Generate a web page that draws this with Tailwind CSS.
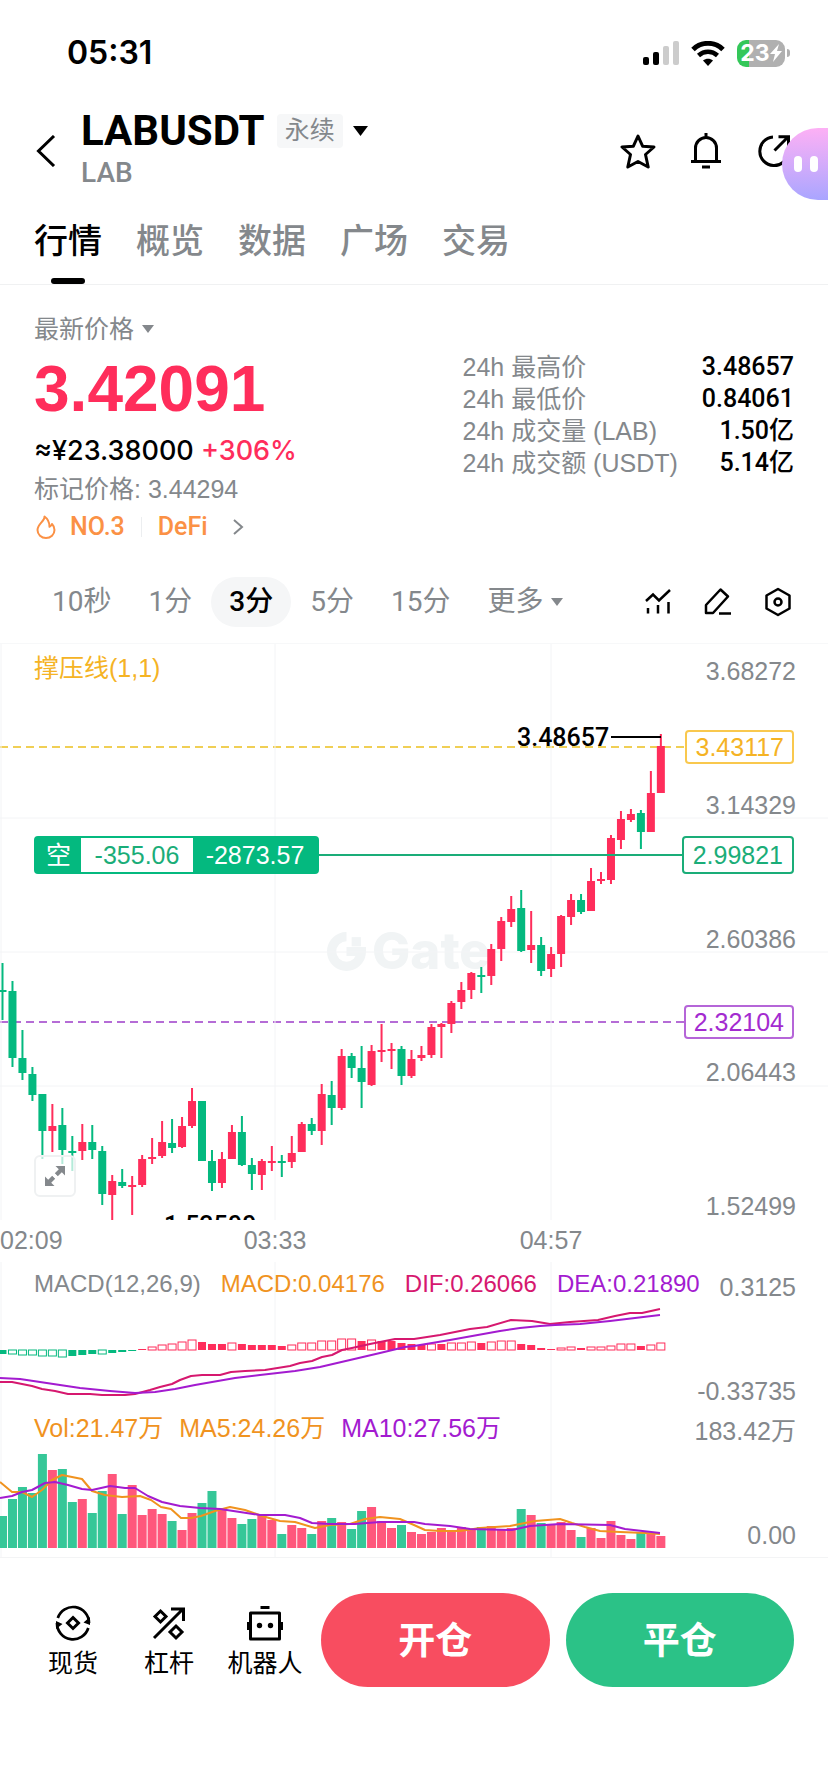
<!DOCTYPE html>
<html lang="zh-CN">
<head>
  <meta charset="UTF-8">
  <meta name="viewport" content="width=device-width, initial-scale=1.0">
  <title>LABUSDT 永续</title>
  <script src="https://cdn.jsdelivr.net/npm/@tailwindcss/browser@4"></script>
</head>
<body class="bg-white text-black min-h-screen overflow-x-hidden font-['Liberation_Sans','Noto_Sans_CJK_SC',sans-serif]">

  <!-- Status bar -->
  <div class="flex items-center justify-between h-[106px] pl-[67px] pr-[38px]">
    <span class="font-['Inter',sans-serif] font-semibold text-[32px] leading-8">05:31</span>
    <div class="flex items-center gap-3">
      <svg class="w-9 h-6" viewBox="0 0 36 24">
        <rect x="0" y="16" width="6" height="8" rx="2" fill="#000"/>
        <rect x="10" y="11" width="6" height="13" rx="2" fill="#000"/>
        <rect x="20" y="5" width="6" height="19" rx="2" fill="#ccc"/>
        <rect x="30" y="0" width="6" height="24" rx="2" fill="#ccc"/>
      </svg>
      <svg class="w-[34px] h-[25px]" viewBox="0 0 34 25">
        <path d="M2 8.500C10.500 0.300 23.500 0.300 32 8.500" fill="none" stroke="#000" stroke-width="5"/>
        <path d="M7.500 14.500C13 9.500 21 9.500 26.500 14.500" fill="none" stroke="#000" stroke-width="4.500"/>
        <path d="M17 25l-5-5.500c3-2.300 7-2.300 10 0z" fill="#000"/>
      </svg>
      <div class="flex items-center gap-0.5">
        <div class="flex items-center justify-center w-12 h-[27px] rounded-[9px] text-white bg-linear-to-r from-[#34c759] from-25% to-[#b0b0b0] to-25%">
          <span class="font-['Inter',sans-serif] font-bold text-[23px] leading-6">23</span>
          <svg class="w-3 h-[18px]" viewBox="0 0 12 18"><path d="M9 0L0 10h5l-2 8 9-11H7z" fill="#fff"/></svg>
        </div>
        <div class="w-[3px] h-2 rounded-r-full bg-[#b0b0b0]"></div>
      </div>
    </div>
  </div>

  <!-- Header -->
  <header class="relative flex items-center h-[90px] pl-9 pr-9">
    <button aria-label="返回" class="w-[45px]">
      <svg class="w-5 h-8" viewBox="0 0 20 32"><path d="M18 1L2.500 16 18 31" fill="none" stroke="#000" stroke-width="3"/></svg>
    </button>
    <div class="pb-1 font-['Roboto','Noto_Sans_CJK_SC',sans-serif]">
      <div class="flex items-center h-12">
        <h1 class="font-bold text-[42px] leading-12">LABUSDT</h1>
        <span class="ml-3 px-2 h-[34px] leading-[34px] rounded bg-[#f6f7f8] text-[25px] text-[#84888c]">永续</span>
        <svg class="ml-2.5 w-[15px] h-2.5" viewBox="0 0 15 10"><path d="M0 0h15L7.500 10z"/></svg>
      </div>
      <p class="font-medium text-[28px] leading-9 text-[#84888c]">LAB</p>
    </div>
    <div class="flex items-center gap-8 ml-auto">
      <button aria-label="收藏">
        <svg class="w-9 h-9" viewBox="0 0 36 36"><path d="M18 3l4.600 10.200 11.400.8-8.500 7.500 2.700 12.500L18 28.500 7.800 34l2.700-12.500L2 14l11.400-.8z" fill="none" stroke="#000" stroke-width="3" stroke-linejoin="round"/></svg>
      </button>
      <button aria-label="提醒">
        <svg class="w-9 h-9" viewBox="0 0 36 36"><path d="M18 0v4M7.500 28V15a10.500 10.500 0 0 1 21 0v13M3 28.500h30M14 34h8" fill="none" stroke="#000" stroke-width="3"/></svg>
      </button>
      <button aria-label="分享">
        <svg class="w-9 h-9" viewBox="0 0 36 36"><path d="M17 4A14.300 14.300 0 1 0 32.300 20M18.500 17.500L32 4M22.500 3.800H32.500V13.500" fill="none" stroke="#000" stroke-width="3"/></svg>
      </button>
    </div>
    <button aria-label="助手" class="absolute right-0 top-[22px] flex items-center gap-2 w-[46px] h-[72px] pl-3 rounded-l-[36px] bg-linear-to-b from-[#fdb0f5] to-[#a9a5ff]">
      <span class="w-2 h-4 rounded-full bg-white"></span>
      <span class="w-2 h-4 rounded-full bg-white"></span>
    </button>
  </header>

  <!-- Tabs -->
  <nav class="flex gap-[34px] h-[89px] px-[34px] border-b border-[#f0f1f2] text-[34px] font-medium text-[#84888c]">
    <a href="#" class="flex flex-col items-center justify-end text-black">
      <span class="leading-[50px] mb-3">行情</span>
      <span class="w-[34px] h-1.5 rounded-sm bg-black"></span>
    </a>
    <a href="#" class="leading-[50px] pt-5">概览</a>
    <a href="#" class="leading-[50px] pt-5">数据</a>
    <a href="#" class="leading-[50px] pt-5">广场</a>
    <a href="#" class="leading-[50px] pt-5">交易</a>
  </nav>

  <!-- Price summary -->
  <section class="flex justify-between px-[34px] pt-6 pb-7 text-[25px]">
    <div>
      <button class="flex items-center gap-2 leading-10 text-[#84888c]">最新价格
        <svg class="w-3 h-2" viewBox="0 0 12 8"><path d="M0 0h12L6 8z" fill="#84888c"/></svg>
      </button>
      <p class="font-bold text-[64px] leading-20 text-[#ff2d5b]">3.42091</p>
      <p class="font-['Inter',sans-serif] font-medium text-[27px] leading-11">≈¥23.38000 <span class="text-[#ff2d5b]">+306%</span></p>
      <p class="leading-8 text-[#84888c]">标记价格: 3.44294</p>
      <a href="#" class="flex items-center h-11 text-[25px] font-['Roboto',sans-serif] font-medium text-[#fb9145]">
        <svg class="w-6 h-6 mr-3" viewBox="0 0 24 24"><path d="M10.500 1.500C11 6 3.500 9 3.500 15a8.500 8 0 0 0 17 0c0-2.500-1-4.500-2.500-6-.5 1.500-1.300 2.300-2.500 2.800C15.500 8 14 4 10.500 1.500z" fill="none" stroke="#fb9145" stroke-width="2" stroke-linejoin="round"/></svg>
        NO.3
        <span class="w-px h-5 mx-4 bg-[#eceef0]"></span>
        DeFi
        <svg class="w-3 h-4 ml-6" viewBox="0 0 12 16"><path d="M2 1l8 7-8 7" fill="none" stroke="#84888c" stroke-width="2"/></svg>
      </a>
    </div>
    <dl class="grid grid-cols-[auto_auto] content-start gap-x-6 mt-[42px] leading-8 text-[#84888c]">
      <dt>24h 最高价</dt>
      <dd class="text-right text-black font-['Roboto','Noto_Sans_CJK_SC',sans-serif] font-medium">3.48657</dd>
      <dt>24h 最低价</dt>
      <dd class="text-right text-black font-['Roboto','Noto_Sans_CJK_SC',sans-serif] font-medium">0.84061</dd>
      <dt>24h 成交量 (LAB)</dt>
      <dd class="text-right text-black font-['Roboto','Noto_Sans_CJK_SC',sans-serif] font-medium">1.50亿</dd>
      <dt>24h 成交额 (USDT)</dt>
      <dd class="text-right text-black font-['Roboto','Noto_Sans_CJK_SC',sans-serif] font-medium">5.14亿</dd>
    </dl>
  </section>

  <!-- Intervals -->
  <div class="flex items-center gap-px h-[50px] mb-4 px-[34px] text-[28px] text-[#84888c] font-['Roboto','Noto_Sans_CJK_SC',sans-serif]">
    <button class="px-[18px]">10秒</button>
    <button class="px-[18px]">1分</button>
    <button class="px-[18px] h-[50px] rounded-full bg-[#f5f6f7] text-black font-medium">3分</button>
    <button class="px-[18px]">5分</button>
    <button class="px-[18px]">15分</button>
    <button class="flex items-center gap-2 px-[18px]">更多
      <svg class="w-3 h-2" viewBox="0 0 12 8"><path d="M0 0h12L6 8z" fill="#84888c"/></svg>
    </button>
    <div class="flex items-center gap-7 ml-auto">
      <button aria-label="指标"><svg class="w-8 h-8" viewBox="0 0 32 32"><path d="M4 15l7-6.500 6 6L28 4M6 22v5.500M16 19v8.500M26.500 16v11.500" fill="none" stroke="#000" stroke-width="2.500"/></svg></button>
      <button aria-label="画线"><svg class="w-8 h-8" viewBox="0 0 32 32"><path d="M4 27v-8L18.500 3.500l7.500 7L11 27zM17 27.500h12" fill="none" stroke="#000" stroke-width="2.500" stroke-linejoin="round"/></svg></button>
      <button aria-label="设置"><svg class="w-8 h-8" viewBox="0 0 32 32"><path d="M16 3l11.500 6.500v13L16 29 4.500 22.500v-13z" fill="none" stroke="#000" stroke-width="2.500" stroke-linejoin="round"/><circle cx="16" cy="16" r="3.500" fill="none" stroke="#000" stroke-width="2.500"/></svg></button>
    </div>
  </div>

  <!-- Candles -->
  <section class="relative h-[577px] overflow-hidden border-t border-[#f7f8f9] text-[25px]">
    <div class="absolute left-[327px] top-[277px] flex items-center gap-1.5 text-[#f1f4f5]">
      <svg class="w-[39px] h-[39px]" viewBox="0 0 38 38"><path d="M19 4.500A14.500 14.500 0 1 0 33.500 19H19" fill="none" stroke="#f1f4f5" stroke-width="9"/><path d="M24 5h9v9h-9z" fill="#f1f4f5"/></svg>
      <span class="font-['Inter',sans-serif] font-extrabold text-[51px] leading-[60px]">Gate</span>
    </div>
    <!-- Support and resistance levels, they end at their price tags -->
    <svg class="absolute left-0 top-0 w-[calc(100%-144px)] h-full">
      <line x1="0" x2="100%" y1="103" y2="103" stroke="#f0cf55" stroke-width="2" stroke-dasharray="8 5"/>
      <line x1="0" x2="100%" y1="378" y2="378" stroke="#b56cd6" stroke-width="2" stroke-dasharray="8 5"/>
    </svg>
    <svg id="candles" class="absolute inset-0 w-full h-full"></svg>

    <p class="absolute left-[34px] top-1.5 leading-9 text-[#f5b324]">撑压线(1,1)</p>

    <div class="absolute right-8 top-3 flex flex-col justify-between h-[565px] leading-[30px] text-right text-[#84888c]">
      <span>3.68272</span><span>3.14329</span><span>2.60386</span><span>2.06443</span><span>1.52499</span>
    </div>

    <span class="absolute left-[517px] top-[78px] leading-8 font-['Roboto',sans-serif] font-medium">3.48657</span>
    <span class="absolute left-[164px] top-[566px] leading-8 font-['Roboto',sans-serif] font-medium">1.52500</span>

    <div class="absolute right-[34px] top-[86px] h-[34px] px-2 rounded border-2 border-[#f9c84e] bg-white leading-[30px] text-[#f5b324]">3.43117</div>
    <div class="absolute right-[34px] top-[361px] h-[34px] px-2 rounded border-2 border-[#b565d8] bg-white leading-[30px] text-[#a32bd0]">2.32104</div>

    <!-- Open short position -->
    <div class="absolute left-[34px] right-[34px] top-[192px] flex items-center h-[38px] text-[#1aad78]">
      <div class="flex h-full rounded border-2 border-[#04b97f] bg-[#04b97f] leading-[34px] text-white overflow-hidden">
        <span class="w-[45px] text-center">空</span>
        <span class="w-28 text-center bg-white text-[#1aad78]">-355.06</span>
        <span class="w-[124px] text-center">-2873.57</span>
      </div>
      <span class="flex-1 h-0.5 bg-[#1aad78]"></span>
      <span class="h-full px-[9px] rounded border-2 border-[#1aad78] bg-white leading-[34px]">2.99821</span>
    </div>

    <button aria-label="全屏" class="absolute left-[34px] top-[511px] flex items-center justify-center w-[42px] h-[42px] rounded-md border-2 border-[#eff1f2] bg-white/70">
      <svg class="w-5 h-5" viewBox="0 0 20 20"><path d="M10.500 0H20v9.500l-3.200-3.200-4 4-3-3 4-4zM0 10.500l3.200 3.200 4-4 3 3-4 4L9.500 20H0z" fill="#84888c"/><path d="M6 6l8 8" stroke="#fff" stroke-width="3"/></svg>
    </button>
  </section>

  <!-- Time axis -->
  <div class="flex h-[42px] leading-10 text-[25px] text-[#84888c]">
    <span class="w-[137px]">02:09</span>
    <span class="w-[276px] text-center">03:33</span>
    <span class="w-[276px] text-center">04:57</span>
  </div>

  <!-- MACD -->
  <section class="relative h-[146px] text-[24px]">
    <svg id="macd" class="absolute inset-0 w-full h-full"></svg>
    <div class="relative flex gap-5 pl-[34px] pt-1.5 leading-8 text-[#84888c]">
      <span>MACD(12,26,9)</span>
      <span class="text-[#f0931f]">MACD:0.04176</span>
      <span class="text-[#d6186f]">DIF:0.26066</span>
      <span class="text-[#a31bd0]">DEA:0.21890</span>
    </div>
    <div class="absolute right-8 top-[9px] flex flex-col justify-between h-[136px] leading-8 text-[25px] text-right text-[#84888c]">
      <span>0.3125</span><span>-0.33735</span>
    </div>
  </section>

  <!-- Volume -->
  <section class="relative h-[150px] border-b border-[#f3f4f5] text-[25px]">
    <svg id="volume" class="absolute inset-0 w-full h-full"></svg>
    <div class="relative flex gap-4 pl-[34px] pt-0.5 leading-9">
      <span class="text-[#f0931f]">Vol:21.47万</span>
      <span class="text-[#f0931f]">MA5:24.26万</span>
      <span class="text-[#a31bd0]">MA10:27.56万</span>
    </div>
    <div class="absolute right-8 top-[7px] flex flex-col justify-between h-[136px] leading-8 text-right text-[#84888c]">
      <span>183.42万</span><span>0.00</span>
    </div>
  </section>

  <!-- Bottom actions -->
  <footer class="flex items-center pl-[25px] pr-[34px] pt-[35px] pb-24">
    <nav class="flex mr-2 pt-1 text-[25px] leading-8">
      <a href="#" class="flex flex-col items-center gap-1.5 w-24">
        <svg class="w-9 h-9" viewBox="0 0 36 36"><path d="M2.800 13A16 16 0 0 1 34 18M33.300 23A16 16 0 0 1 2 18" fill="none" stroke="#000" stroke-width="2.700"/><path d="M35 12v8l-6.500-2.500zM1 24v-8l6.500 3z"/><path d="M18 12.500l5.500 5.500-5.500 5.500-5.500-5.500z" fill="none" stroke="#000" stroke-width="3"/></svg>
        现货
      </a>
      <a href="#" class="flex flex-col items-center gap-1.5 w-24">
        <svg class="w-9 h-9" viewBox="0 0 36 36"><path d="M3 33L32 4M20 4h12.500v12M9.500 6l5.500 5.500L9.500 17 4 11.500zM25 21l6 6-6 6-6-6z" fill="none" stroke="#000" stroke-width="3"/></svg>
        杠杆
      </a>
      <a href="#" class="flex flex-col items-center gap-1.5 w-24">
        <svg class="w-9 h-9" viewBox="0 0 36 36"><path d="M3.500 8h29v26h-29zM13.500 2.500h9M1.500 17v8M34.500 17v8" fill="none" stroke="#000" stroke-width="3" stroke-linejoin="round"/><circle cx="12.500" cy="20.500" r="2.700"/><circle cx="23.500" cy="20.500" r="2.700"/></svg>
        机器人
      </a>
    </nav>
    <div class="flex flex-1 gap-4 text-[37px] font-bold text-white">
      <button class="flex-1 h-[94px] pt-1 rounded-full bg-[#f84d60]">开仓</button>
      <button class="flex-1 h-[94px] pt-1 rounded-full bg-[#2bc287]">平仓</button>
    </div>
  </footer>

  <script>
    const RED = "#ff2d5b";
    const GREEN = "#04b97f";
    const GRID = "#f3f4f6";
    const x = i => 2.5 + i * 9.975;

    // [up, high, body top, body bottom, low]
    const candles = [
      [0,319,346,348,376],[0,337,347,414,423],[0,386,414,429,436],[0,423,430,451,457],[0,450,450,487,515],
      [1,460,482,487,508],[0,464,481,506,520],[0,492,507,509,527],[1,480,498,507,516],[0,481,498,506,515],
      [0,502,507,550,561],[1,531,537,551,577],[0,525,538,542,544],[1,532,541,543,571],[1,511,515,541,543],
      [1,494,513,515,520],[1,477,498,512,514],[0,475,499,504,509],[1,473,482,503,504],[1,444,457,482,484],
      [0,457,457,517,517],[0,506,517,539,547],[1,508,515,539,544],[1,481,488,515,515],[0,472,488,521,522],
      [0,514,521,530,546],[1,515,517,531,546],[1,502,517,519,527],[0,511,517,519,533],[1,492,509,518,524],
      [1,478,480,508,508],[0,474,480,487,491],[1,440,450,487,501],[0,437,451,464,481],[1,405,412,464,466],
      [0,409,412,424,434],[0,402,424,438,464],[1,401,407,441,442],[1,380,406,408,418],[1,399,405,407,425],
      [0,402,405,432,441],[1,406,415,432,434],[1,402,411,414,417],[1,380,383,411,414],[1,379,380,383,414],
      [1,357,359,380,389],[1,338,346,358,365],[1,328,329,346,355],[0,323,331,333,349],[1,300,305,332,341],
      [1,273,277,305,317],[1,252,265,278,283],[0,246,264,307,308],[1,267,301,306,319],[0,293,301,327,332],
      [1,303,310,325,333],[1,271,272,310,323],[1,250,256,273,281],[0,250,256,268,270],[1,224,237,267,267],
      [1,228,235,237,240],[1,191,194,236,240],[1,167,175,196,205],[1,165,170,176,178],[0,166,169,188,205],
      [1,127,149,188,188],[1,90,102,149,149]
    ];

    // [height, hollow], negative values are below the zero line
    const macd = [
      [-4,0],[-4,1],[-5,1],[-5,1],[-6,1],[-6,1],[-7,1],[-6,0],[-5,0],[-4,0],[-4,1],[-3,0],[-2,0],[-1,0],[1,0],[3,1],[5,1],
      [6,1],[8,1],[10,1],[8,0],[6,0],[6,0],[7,1],[6,0],[5,0],[5,0],[5,0],[4,0],[5,1],[7,1],[7,1],[9,1],[9,1],[11,1],[11,1],
      [9,0],[10,1],[9,0],[9,0],[7,0],[6,0],[5,0],[6,1],[6,0],[7,1],[7,1],[8,1],[7,0],[8,1],[9,1],[9,1],[6,0],[5,0],[2,0],
      [1,0],[2,1],[3,1],[2,0],[3,1],[3,1],[4,1],[6,1],[6,1],[4,0],[5,1],[7,1]
    ];
    const dif = "0,120 12,120 32,124 42,127 55,129 68,132 90,132 102,133 125,133 135,132 150,128 160,125 172,122 180,118 191,114 202,113 220,113 231,110 245,109 265,108 290,104 300,101 312,99 322,95 332,93 342,88 352,86 370,82 385,79 395,77 414,77 440,73 470,67 487,65 511,58 532,59 550,62 570,60 598,58 615,54 630,51 642,51 660,47";
    const dea = "0,116 20,117 40,120 60,123 80,126 110,129 135,131 155,130 175,127 195,123 235,116 260,113 295,109 320,105 350,98 380,91 405,85 414,84 450,78 500,69 520,66 540,64 555,63 580,62 610,59 635,56 660,53";

    const volumes = [
      32,49,61,55,94,78,79,46,49,35,57,74,34,63,33,39,34,27,18,35,45,57,40,30,24,29,34,28,14,23,20,14,27,30,26,19,37,
      41,27,20,23,16,14,16,20,16,21,18,21,22,18,20,39,33,25,23,26,18,11,20,10,27,13,9,15,15,12
    ];
    const ma5 = "0,74 12,84 22,84 32,89 42,82 52,72 62,67 72,69 82,71 92,83 105,87 122,89 140,88 151,92 161,99 171,101 181,110 191,110 201,108 215,103 230,99 245,102 262,108 280,113 295,114 315,120 330,117 350,116 365,111 380,109 400,111 414,117 425,122 440,123 460,123 480,120 510,118 535,113 560,111 572,115 585,119 600,123 620,124 645,125 660,126";
    const ma10 = "0,90 12,88 22,84 32,82 45,75 55,74 68,77 82,81 92,82 110,78 125,80 135,80 148,88 162,94 180,98 200,100 220,101 240,104 260,107 285,107 300,110 312,115 330,116 355,116 380,114 414,114 425,116 450,118 470,121 512,122 530,118 560,116 610,117 625,121 660,125";

    const rect = (cx, y, w, h, c) => `<rect x="${cx - w / 2}" y="${y}" width="${w}" height="${h}" fill="${c}"/>`;
    const poly = (pts, c) => `<polyline points="${pts}" fill="none" stroke="${c}" stroke-width="2" stroke-linejoin="round"/>`;
    const columns = [1, 275, 551].map(v => `<line x1="${v}" x2="${v}" y1="0" y2="100%" stroke="${GRID}"/>`).join("");
    const rows = [174, 308, 442].map(v => `<line x1="0" x2="100%" y1="${v}" y2="${v}" stroke="${GRID}"/>`).join("");

    let out = columns + rows;
    candles.forEach(([up, high, top, bottom, low], i) => {
      const c = up ? RED : GREEN;
      out += rect(x(i), high, 2, low - high, c) + rect(x(i), top, 8, Math.max(bottom - top, 2), c);
    });
    out += '<line x1="611" x2="661" y1="93" y2="93" stroke="#000" stroke-width="2"/>';
    document.getElementById("candles").innerHTML = out;

    out = columns;
    macd.forEach(([v, hollow], i) => {
      const c = v > 0 ? RED : GREEN;
      const y = v > 0 ? 88 - v : 88;
      const h = Math.abs(v);
      out += hollow
        ? `<rect x="${x(i) - 4}" y="${y}" width="8" height="${h}" fill="#fff" stroke="${c}"/>`
        : rect(x(i), y, 8, h, c);
    });
    out += poly(dif, "#d6186f") + poly(dea, "#a31bd0");
    document.getElementById("macd").innerHTML = out;

    out = columns;
    volumes.forEach((v, i) => {
      out += rect(x(i), 140 - v, 9, v, candles[i][0] ? "#ff577c" : "#36c798");
    });
    out += poly(ma5, "#f0931f") + poly(ma10, "#a31bd0");
    document.getElementById("volume").innerHTML = out;
  </script>
</body>
</html>
